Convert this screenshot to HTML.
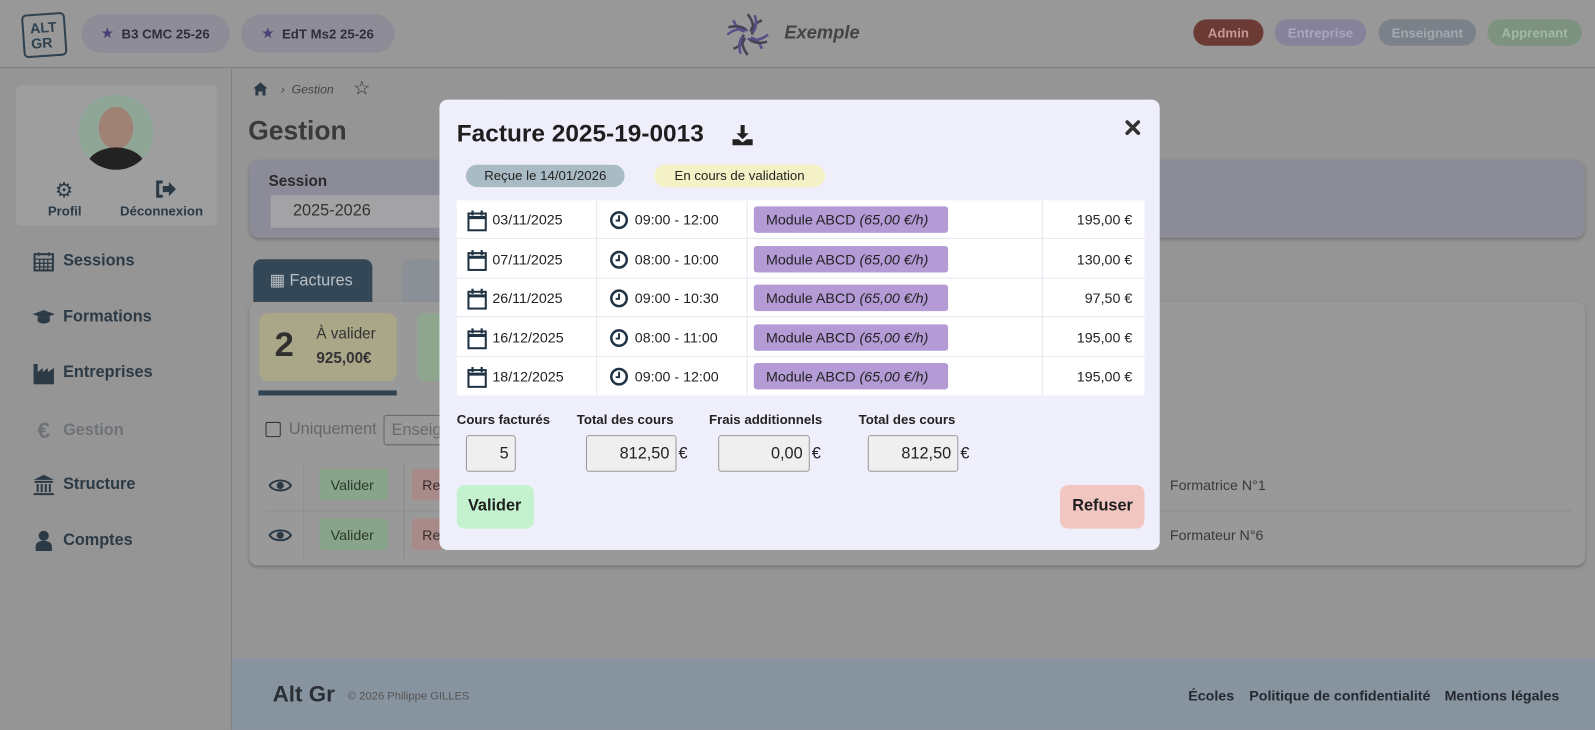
<!DOCTYPE html>
<html><head><meta charset="utf-8"><style>
*{box-sizing:border-box;margin:0;padding:0}
html,body{width:1595px;height:730px;overflow:hidden;background:#979797;font-family:"Liberation Sans",sans-serif}
#w{position:absolute;left:0;top:0;width:1568px;height:718px;transform:scale(1.0173,1.0167);transform-origin:0 0;background:#959595}
.a{position:absolute}
.pill{position:absolute;border-radius:20px;font-weight:bold;font-size:13px;display:flex;align-items:center;justify-content:center}
.nav{position:absolute;left:32px;font-size:16px;font-weight:bold;color:#2c3a46;display:flex;align-items:center;gap:8px}
.nav svg{width:22px;height:22px}
.row{position:absolute;left:0;width:676px;height:38px;border-bottom:1px solid #e6e6ee;font-size:14px;color:#222}
.row span{position:absolute;top:11px}
.row svg{position:absolute;top:9px}
.mod{position:absolute;left:292px;top:6px;width:191px;height:26px;background:#b49bd6;border-radius:3px;font-size:14px;color:#222;padding:5px 0 0 12px}
.lbl{position:absolute;top:405px;font-size:13px;font-weight:bold;color:#222}
.inp{position:absolute;top:428px;height:36px;background:#efefef;border:1px solid #999;border-radius:3px;font-size:16px;text-align:right;padding:9px 6px 0 0;color:#222}
.eur{position:absolute;top:438px;font-size:16px;color:#222}
</style></head><body><div id="w">
<svg width="0" height="0" style="position:absolute"><defs>
<symbol id="cal" viewBox="0 0 20 22"><rect x="1.5" y="4" width="17" height="16.5" fill="none" stroke="#1f3344" stroke-width="2"/><path d="M1.5 8h17" stroke="#1f3344" stroke-width="3"/><path d="M5.5 1v5M14.5 1v5" stroke="#1f3344" stroke-width="2.2"/></symbol>
<symbol id="clk" viewBox="0 0 20 20"><circle cx="10" cy="10" r="8" fill="none" stroke="#1f3344" stroke-width="2.6"/><path d="M10 5v5.5H6.5" fill="none" stroke="#1f3344" stroke-width="2"/></symbol>
</defs></svg>
<!-- header -->
<div class="a" style="left:0;top:0;width:1568px;height:67px;background:#989898;border-bottom:1px solid #7e7e7e"></div>
<div class="a" style="left:22px;top:13px;width:43px;height:43px;border:2.5px solid #2f4250;border-radius:5px;transform:rotate(-4deg);font-weight:bold;font-size:14px;line-height:15px;color:#2f4250;padding:5px 0 0 6px">ALT<br>GR</div>
<div class="pill" style="left:80px;top:14px;width:146px;height:38px;background:#8e8d97;color:#2e2d3a"><span style="color:#4b3d78;margin-right:8px">★</span>B3 CMC 25-26</div>
<div class="pill" style="left:237px;top:14px;width:151px;height:38px;background:#8e8d97;color:#2e2d3a"><span style="color:#4b3d78;margin-right:8px">★</span>EdT Ms2 25-26</div>
<svg class="a" style="left:712px;top:11px" width="46" height="46" viewBox="-23 -23 46 46"><g fill="none" stroke-width="2.5">
<path d="M0-20 Q8-10 4 0" stroke="#445"/><path d="M20 0 Q10 8 0 4" stroke="#5a4d88"/><path d="M0 20 Q-8 10 -4 0" stroke="#445"/><path d="M-20 0 Q-10 -8 0 -4" stroke="#5a4d88"/>
<path d="M14-14 Q4-10 3-3" stroke="#445"/><path d="M14 14 Q10 4 3 3" stroke="#5a4d88"/><path d="M-14 14 Q-4 10 -3 3" stroke="#445"/><path d="M-14-14 Q-10-4 -3-3" stroke="#5a4d88"/>
<path d="M7-19 Q10-8 5-2" stroke="#5a4d88"/><path d="M19 7 Q8 10 2 5" stroke="#445"/><path d="M-7 19 Q-10 8 -5 2" stroke="#5a4d88"/><path d="M-19-7 Q-8-10 -2-5" stroke="#445"/></g></svg>
<div class="a" style="left:771px;top:22px;font-size:18px;font-weight:bold;font-style:italic;color:#444">Exemple</div>
<div class="pill" style="left:1173px;top:19px;width:69px;height:26px;background:#6b3a34;color:#c29a94">Admin</div>
<div class="pill" style="left:1253px;top:19px;width:90px;height:26px;background:#86829a;color:#a9a6bd">Entreprise</div>
<div class="pill" style="left:1355px;top:19px;width:96px;height:26px;background:#7b8189;color:#a3a9b0">Enseignant</div>
<div class="pill" style="left:1462px;top:19px;width:93px;height:26px;background:#7d937f;color:#a2b7a4">Apprenant</div>
<!-- sidebar -->
<div class="a" style="left:227px;top:68px;width:1px;height:650px;background:#808080"></div>
<div class="a" style="left:16px;top:84px;width:197px;height:138px;background:#9e9e9e;border-radius:4px"></div>
<div class="a" style="left:77px;top:93px;width:74px;height:74px;border-radius:50%;background:#8fa595;overflow:hidden"><div style="position:absolute;left:20px;top:12px;width:34px;height:42px;border-radius:50%;background:#a08274"></div><div style="position:absolute;left:8px;top:52px;width:58px;height:40px;border-radius:50%;background:#222"></div></div>
<div class="a" style="left:54px;top:175px;font-size:20px;color:#2c3a46">⚙</div>
<div class="a" style="left:47px;top:200px;font-size:13px;font-weight:bold;color:#2c3a46">Profil</div>
<svg class="a" style="left:152px;top:177px" width="22" height="18" viewBox="0 0 22 18"><path d="M8 2H3v14h5" fill="none" stroke="#2c3a46" stroke-width="3"/><path d="M8 6h6V2l7 7-7 7v-4H8z" fill="#2c3a46"/></svg>
<div class="a" style="left:118px;top:200px;font-size:13px;font-weight:bold;color:#2c3a46">Déconnexion</div>
<div class="nav" style="top:246px"><svg viewBox="0 0 22 22"><rect x="2" y="4" width="18" height="16" fill="none" stroke="#2c3a46" stroke-width="2"/><path d="M2 9h18M6 2v4M16 2v4M2 13h18M2 16.5h18M7 9v11M11 9v11M15 9v11" stroke="#2c3a46" stroke-width="1.3"/></svg>Sessions</div>
<div class="nav" style="top:301px"><svg viewBox="0 0 22 22"><path d="M0 8l11-4 11 4-11 4z M5 10v5c3 3 9 3 12 0v-5l-6 2z" fill="#2c3a46"/></svg>Formations</div>
<div class="nav" style="top:356px"><svg viewBox="0 0 22 22"><path d="M1 2h4v8l5-4v4l5-4v4l6-4v16H1z" fill="#2c3a46"/></svg>Entreprises</div>
<div class="nav" style="top:411px;color:#6e7276"><span style="width:22px;font-size:22px;text-align:center">€</span>Gestion</div>
<div class="nav" style="top:466px"><svg viewBox="0 0 22 22"><path d="M11 1l10 5H1z M2 7h18v2H2z M4 10h2v8H4z M8 10h2v8H8z M12 10h2v8h-2z M16 10h2v8h-2z M1 19h20v2H1z" fill="#2c3a46"/></svg>Structure</div>
<div class="nav" style="top:521px"><svg viewBox="0 0 22 22"><circle cx="11" cy="6" r="5" fill="#2c3a46"/><path d="M3 21v-4c0-4 3-6 8-6s8 2 8 6v4z" fill="#2c3a46"/></svg>Comptes</div>
<!-- main -->
<svg class="a" style="left:249px;top:81px" width="14" height="13" viewBox="0 0 14 13"><path d="M7 0l7 6h-2v7H9V9H5v4H2V6H0z" fill="#2c3a46"/></svg>
<div class="a" style="left:276px;top:81px;font-size:12px;font-style:italic;color:#444">›&nbsp;&nbsp;Gestion</div>
<div class="a" style="left:347px;top:76px;font-size:19px;color:#333">☆</div>
<div class="a" style="left:244px;top:113px;font-size:26px;font-weight:bold;color:#3a3a3a">Gestion</div>
<div class="a" style="left:245px;top:157px;width:1313px;height:77px;background:#8b8c97;border-radius:10px;box-shadow:0 2px 3px #777"></div>
<div class="a" style="left:264px;top:170px;font-size:15px;font-weight:bold;color:#2a2a2a">Session</div>
<div class="a" style="left:266px;top:192px;width:170px;height:32px;background:#a3a3a5;font-size:16px;color:#333;padding:7px 0 0 22px">2025-2026</div>
<div class="a" style="left:249px;top:255px;width:117px;height:42px;background:#344756;border-radius:8px 8px 0 0;color:#b9c0c6;font-size:16px;padding:11px 0 0 16px">▦ Factures</div>
<div class="a" style="left:395px;top:255px;width:50px;height:42px;background:#8a9096;border-radius:8px 8px 0 0"></div>
<div class="a" style="left:245px;top:297px;width:1313px;height:259px;background:#999;border-radius:8px;box-shadow:0 2px 3px #777"></div>
<div class="a" style="left:255px;top:308px;width:135px;height:67px;background:#aaa688;border-radius:8px"></div>
<div class="a" style="left:270px;top:320px;font-size:34px;font-weight:bold;color:#2f2f2f">2</div>
<div class="a" style="left:311px;top:320px;font-size:15px;color:#333">À valider</div>
<div class="a" style="left:311px;top:344px;font-size:15px;font-weight:bold;color:#333">925,00€</div>
<div class="a" style="left:254px;top:384px;width:136px;height:5px;background:#2f4352"></div>
<div class="a" style="left:410px;top:308px;width:40px;height:67px;background:#8ea68e;border-radius:8px"></div>
<div class="a" style="left:261px;top:415px;width:15px;height:15px;border:1.5px solid #333;border-radius:2px"></div>
<div class="a" style="left:284px;top:414px;font-size:16px;color:#666">Uniquement</div>
<div class="a" style="left:377px;top:408px;width:60px;height:30px;border:1px solid #666;border-radius:3px;font-size:16px;color:#6a6a6a;padding:6px 0 0 7px;overflow:hidden">Enseig</div>
<div class="a" style="left:260px;top:502px;width:1285px;height:1px;background:#8c8c8c"></div>
<div class="a" style="left:298px;top:455px;width:1px;height:95px;background:#8c8c8c"></div>
<div class="a" style="left:397px;top:455px;width:1px;height:95px;background:#8c8c8c"></div>
<svg class="a" style="left:264px;top:470px" width="23" height="15" viewBox="0 0 23 15"><path d="M1 7.5C5 1 18 1 22 7.5 18 14 5 14 1 7.5z" fill="none" stroke="#2c3a46" stroke-width="2"/><circle cx="11.5" cy="7.5" r="3.5" fill="#2c3a46"/></svg>
<svg class="a" style="left:264px;top:519px" width="23" height="15" viewBox="0 0 23 15"><path d="M1 7.5C5 1 18 1 22 7.5 18 14 5 14 1 7.5z" fill="none" stroke="#2c3a46" stroke-width="2"/><circle cx="11.5" cy="7.5" r="3.5" fill="#2c3a46"/></svg>
<div class="a" style="left:314px;top:461px;width:67px;height:31px;background:#88a48a;border-radius:3px;font-size:14px;color:#2b3a2c;padding:8px 0 0 11px">Valider</div>
<div class="a" style="left:314px;top:510px;width:67px;height:31px;background:#88a48a;border-radius:3px;font-size:14px;color:#2b3a2c;padding:8px 0 0 11px">Valider</div>
<div class="a" style="left:405px;top:461px;width:30px;height:31px;background:#a88a88;border-radius:3px;font-size:14px;color:#3a2a2a;padding:8px 0 0 10px">Re</div>
<div class="a" style="left:405px;top:510px;width:30px;height:31px;background:#a88a88;border-radius:3px;font-size:14px;color:#3a2a2a;padding:8px 0 0 10px">Re</div>
<div class="a" style="left:1150px;top:469px;font-size:14px;color:#3a3a3a">Formatrice N°1</div>
<div class="a" style="left:1150px;top:518px;font-size:14px;color:#3a3a3a">Formateur N°6</div>
<!-- footer -->
<div class="a" style="left:228px;top:648px;width:1340px;height:70px;background:#8893a0"></div>
<div class="a" style="left:268px;top:670px;font-size:22px;font-weight:bold;color:#2a2f36">Alt Gr</div>
<div class="a" style="left:342px;top:679px;font-size:11px;color:#555">© 2026 Philippe GILLES</div>
<div class="a" style="left:1168px;top:676px;font-size:14px;font-weight:bold;color:#23282e">Écoles</div>
<div class="a" style="left:1228px;top:676px;font-size:14px;font-weight:bold;color:#23282e">Politique de confidentialité</div>
<div class="a" style="left:1420px;top:676px;font-size:14px;font-weight:bold;color:#23282e">Mentions légales</div>
<!-- modal -->
<div class="a" style="left:432px;top:98px;width:708px;height:443px;background:#efeffb;border-radius:8px"></div>
<div class="a" style="left:449px;top:118px;font-size:24px;font-weight:bold;color:#1e1e1e">Facture 2025-19-0013</div>
<svg class="a" style="left:720px;top:123px" width="20" height="20" viewBox="0 0 20 20"><path d="M8 0h4v8h4l-6 6-6-6h4z M0 14h6l4 3 4-3h6v6H0z" fill="#222"/></svg>
<svg class="a" style="left:1106px;top:118px" width="15" height="15" viewBox="0 0 15 15"><path d="M2 2l11 11M13 2L2 13" stroke="#333" stroke-width="3.5" stroke-linecap="round"/></svg>
<div class="a" style="left:458px;top:162px;width:156px;height:22px;background:#a9bcc6;border-radius:11px;font-size:13px;color:#222;text-align:center;padding-top:3px">Reçue le 14/01/2026</div>
<div class="a" style="left:643px;top:162px;width:168px;height:22px;background:#f3f1c5;border-radius:11px;font-size:13px;color:#222;text-align:center;padding-top:3px">En cours de validation</div>
<div class="a" style="left:449px;top:197px;width:676px;height:192px;background:#fff">
<div class="a" style="left:137px;top:0;width:1px;height:192px;background:#e6e6ee"></div>
<div class="a" style="left:285px;top:0;width:1px;height:192px;background:#e6e6ee"></div>
<div class="a" style="left:575px;top:0;width:1px;height:192px;background:#e6e6ee"></div>
<div class="row" style="top:0"><svg style="left:10px" width="20" height="22"><use href="#cal"/></svg><span style="left:35px">03/11/2025</span><svg style="left:150px;top:10px" width="19" height="19"><use href="#clk"/></svg><span style="left:175px">09:00 - 12:00</span><div class="mod">Module ABCD <i>(65,00 €/h)</i></div><span style="right:12px">195,00 €</span></div>
<div class="row" style="top:38.5px"><svg style="left:10px" width="20" height="22"><use href="#cal"/></svg><span style="left:35px">07/11/2025</span><svg style="left:150px;top:10px" width="19" height="19"><use href="#clk"/></svg><span style="left:175px">08:00 - 10:00</span><div class="mod">Module ABCD <i>(65,00 €/h)</i></div><span style="right:12px">130,00 €</span></div>
<div class="row" style="top:77px"><svg style="left:10px" width="20" height="22"><use href="#cal"/></svg><span style="left:35px">26/11/2025</span><svg style="left:150px;top:10px" width="19" height="19"><use href="#clk"/></svg><span style="left:175px">09:00 - 10:30</span><div class="mod">Module ABCD <i>(65,00 €/h)</i></div><span style="right:12px">97,50 €</span></div>
<div class="row" style="top:115.5px"><svg style="left:10px" width="20" height="22"><use href="#cal"/></svg><span style="left:35px">16/12/2025</span><svg style="left:150px;top:10px" width="19" height="19"><use href="#clk"/></svg><span style="left:175px">08:00 - 11:00</span><div class="mod">Module ABCD <i>(65,00 €/h)</i></div><span style="right:12px">195,00 €</span></div>
<div class="row" style="top:154px;border:0"><svg style="left:10px" width="20" height="22"><use href="#cal"/></svg><span style="left:35px">18/12/2025</span><svg style="left:150px;top:10px" width="19" height="19"><use href="#clk"/></svg><span style="left:175px">09:00 - 12:00</span><div class="mod">Module ABCD <i>(65,00 €/h)</i></div><span style="right:12px">195,00 €</span></div>
</div>
<div class="lbl" style="left:449px">Cours facturés</div>
<div class="lbl" style="left:567px">Total des cours</div>
<div class="lbl" style="left:697px">Frais additionnels</div>
<div class="lbl" style="left:844px">Total des cours</div>
<div class="inp" style="left:458px;width:49px">5</div>
<div class="inp" style="left:576px;width:89px">812,50</div><div class="eur" style="left:667px">€</div>
<div class="inp" style="left:706px;width:90px">0,00</div><div class="eur" style="left:798px">€</div>
<div class="inp" style="left:853px;width:89px">812,50</div><div class="eur" style="left:944px">€</div>
<div class="a" style="left:449px;top:477px;width:76px;height:43px;background:#c4f2cf;border-radius:8px;font-size:16px;font-weight:bold;color:#1e1e1e;padding:12px 0 0 11px">Valider</div>
<div class="a" style="left:1042px;top:477px;width:83px;height:43px;background:#f2c6c0;border-radius:8px;font-size:16px;font-weight:bold;color:#1e1e1e;padding:12px 0 0 12px">Refuser</div>
</div></body></html>
